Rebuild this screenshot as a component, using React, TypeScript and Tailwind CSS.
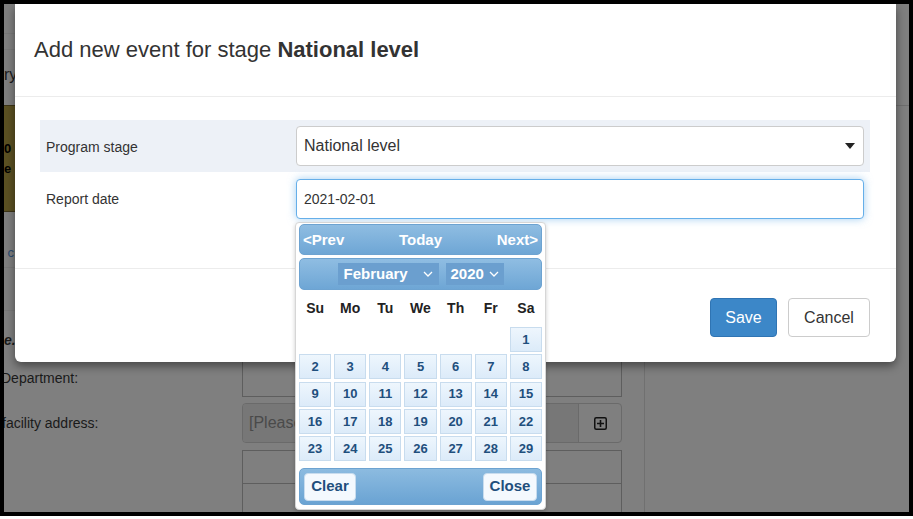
import React from "react";

function Chevron() {
  return (
    <svg width="10" height="6" viewBox="0 0 10 6" className="ml-auto">
      <polyline points="1,1 5,5 9,1" fill="none" stroke="#ffffff" strokeWidth="1.3" />
    </svg>
  );
}

function DatePicker() {
  const cells: (number | null)[] = [null, null, null, null, null, null];
  for (let i = 1; i <= 29; i++) cells.push(i);
  const names = ["Su", "Mo", "Tu", "We", "Th", "Fr", "Sa"];
  return (
    <div className="absolute left-[291px] top-[218px] w-[251px] h-[288px] bg-white border border-[#d6d6d6] rounded-[4px] pt-[1px] px-[3px] shadow-[0_2px_4px_rgba(0,0,0,0.2)] z-20">
      <div className="h-[31px] rounded-[5px] border border-[#6da3d1] bg-gradient-to-b from-[#8fbde2] to-[#6ea6d5] flex items-center justify-between px-[3px] pt-[2px] text-white font-bold text-[15px]">
        <span>&lt;Prev</span>
        <span>Today</span>
        <span>Next&gt;</span>
      </div>
      <div className="mt-[3px] h-[32px] rounded-[5px] border border-[#6da3d1] bg-gradient-to-b from-[#8fbde2] to-[#6ea6d5] flex items-center justify-center gap-[7px] text-white font-bold text-[15px]">
        <div className="w-[101px] h-[22px] bg-[#6b9fcf] flex items-center pl-[6px] pr-[6px]">
          <span>February</span>
          <Chevron />
        </div>
        <div className="w-[58px] h-[22px] bg-[#6b9fcf] flex items-center pl-[5px] pr-[5px]">
          <span>2020</span>
          <Chevron />
        </div>
      </div>
      <div className="mt-[3px] h-[31px] grid grid-cols-7 gap-x-[3px] items-center text-center font-bold text-[14px] text-[#222]">
        {names.map((n) => (
          <span key={n}>{n}</span>
        ))}
      </div>
      <div className="mt-[3px] grid grid-cols-7 gap-x-[3px] gap-y-[2.25px]">
        {cells.map((c, i) =>
          c === null ? (
            <div key={i} className="h-[25px]" />
          ) : (
            <div
              key={i}
              className="h-[25px] border border-[#c8dcee] bg-gradient-to-b from-[#eef6fd] to-[#dcebf9] flex items-center justify-center text-[13px] font-bold text-[#1f4f7d]"
            >
              {c}
            </div>
          )
        )}
      </div>
      <div className="mt-[7px] h-[37px] rounded-[5px] border border-[#6da3d1] bg-gradient-to-b from-[#8cbbe0] to-[#6aa3d3] flex items-center justify-between px-[4px]">
        <div className="w-[52px] h-[28px] rounded-[4px] bg-[#f4f9fe] border border-[#c8dcee] flex items-center justify-center font-bold text-[15px] text-[#1f4f7d]">
          Clear
        </div>
        <div className="w-[54px] h-[28px] rounded-[4px] bg-[#f4f9fe] border border-[#c8dcee] flex items-center justify-center font-bold text-[15px] text-[#1f4f7d]">
          Close
        </div>
      </div>
    </div>
  );
}

function Modal() {
  return (
    <div className="absolute left-[11px] top-0 w-[881px] h-[358px] bg-white rounded-b-[6px] shadow-[0_4px_10px_rgba(0,0,0,0.45)] z-10 flex flex-col text-[#333]">
      <div className="h-[93px] border-b border-[#ececec] flex items-center px-[19px] pb-[2px]">
        <h1 className="text-[22px]">
          Add new event for stage <span className="font-bold">National level</span>
        </h1>
      </div>
      <div className="pt-[23px] pl-[25px] pr-[26px] h-[171px]">
        <div className="h-[52px] bg-[#edf1f7] flex items-center pl-[6px] pr-[6px]">
          <span className="w-[250px] text-[14px] pt-[2px]">Program stage</span>
          <div className="flex-1 h-[40px] bg-white border border-[#cccccc] rounded-[4px] flex items-center pl-[7px] pr-[8px] text-[16px]">
            <span>National level</span>
            <svg width="10" height="6" viewBox="0 0 10 6" className="ml-auto">
              <polygon points="0,0 10,0 5,6" fill="#222" />
            </svg>
          </div>
        </div>
        <div className="h-[54px] flex items-center pl-[6px] pr-[6px]">
          <span className="w-[250px] text-[14px]">Report date</span>
          <div className="flex-1 h-[40px] bg-white border border-[#66afe9] rounded-[4px] shadow-[0_0_8px_rgba(102,175,233,0.6)] flex items-center pl-[7px] text-[14px]">
            2021-02-01
          </div>
        </div>
      </div>
      <div className="flex-1 border-t border-[#ececec] flex justify-end items-start pt-[29px] pr-[26px] gap-[11px]">
        <button className="w-[67px] h-[39px] rounded-[4px] bg-[#3c87c8] border border-[#2f74b3] text-white text-[16px]">
          Save
        </button>
        <button className="w-[82px] h-[39px] rounded-[4px] bg-white border border-[#cccccc] text-[#333] text-[16px]">
          Cancel
        </button>
      </div>
    </div>
  );
}

function Background() {
  return (
    <div className="flex h-full text-[#1a1a1a]">
      <div className="w-[641px] border-r border-[#707070]">
        <div className="h-[101px] flex flex-col">
          <div className="h-[30px] border-b border-[#787878]" />
          <div className="h-[16px] border-b border-[#787878]" />
          <div className="flex-1 flex items-center text-[16px] leading-none pb-[6px]">ry</div>
        </div>
        <div className="h-[107px] bg-[#5b5022] border-y border-[#3d3518] flex flex-col justify-center text-[13px] font-bold leading-[20px] text-black">
          <span>0</span>
          <span>e</span>
        </div>
        <div className="h-[56px] border-b border-[#787878] flex items-end pb-[5px] text-[13px] text-[#2a4a70]">
          <span>&nbsp;c</span>
        </div>
        <div className="h-[43px] border-b border-[#787878]" />
        <div className="h-[43px] pt-[19px] text-[14px] font-bold italic">e.</div>
        <div className="h-[43px] flex">
          <div className="w-[241px] flex items-end pb-[8px] text-[14px] -ml-[3px]">Department:</div>
          <div className="w-[380px] border border-[#5e5e5e] border-t-0" />
        </div>
        <div className="h-[52px] flex items-center">
          <div className="w-[240px] text-[14px] -ml-[2px]">facility address:</div>
          <div className="w-[380px] h-[40px] flex rounded-[4px] border border-[#6a6a6a] overflow-hidden">
            <div className="flex-1 bg-[#777777] border-r border-[#6a6a6a] flex items-center pl-[6px] text-[16px] text-[#4a4a4a]">
              [Please select]
            </div>
            <div className="w-[42px] flex items-center justify-center">
              <svg width="13" height="13" viewBox="0 0 13 13">
                <rect x="0.75" y="0.75" width="11.5" height="11.5" rx="1.5" fill="none" stroke="#111" strokeWidth="1.5" />
                <line x1="6.5" y1="3" x2="6.5" y2="10" stroke="#111" strokeWidth="1.6" />
                <line x1="3" y1="6.5" x2="10" y2="6.5" stroke="#111" strokeWidth="1.6" />
              </svg>
            </div>
          </div>
        </div>
        <div className="flex mt-[1px]">
          <div className="w-[238px]" />
          <div className="w-[380px] flex flex-col">
            <div className="h-[34px] border border-[#5e5e5e]" />
            <div className="h-[40px] border border-t-0 border-[#5e5e5e]" />
          </div>
        </div>
      </div>
      <div className="flex-1 flex flex-col">
        <div className="h-[102px] border-b border-[#6e6e6e]" />
      </div>
    </div>
  );
}

export default function App() {
  return (
    <div className="w-[913px] h-[519px] bg-white font-['Liberation_Sans',Arial,sans-serif]">
      <div className="w-[913px] h-[516px] border-4 border-black bg-[#7f7f7f] relative overflow-hidden">
        <Background />
        <Modal />
        <DatePicker />
      </div>
    </div>
  );
}
